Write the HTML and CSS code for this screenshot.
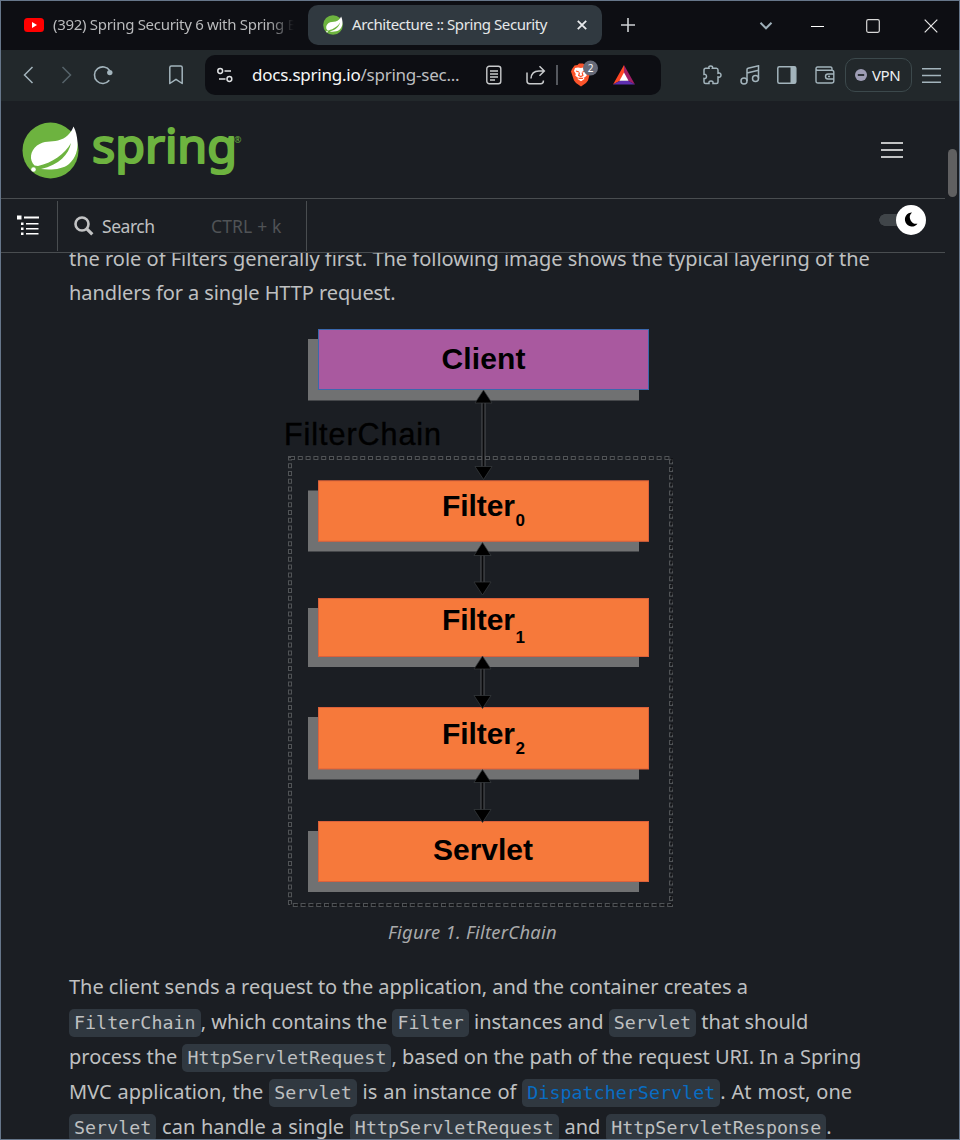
FILE: index.html
```html
<!DOCTYPE html>
<html lang="en">
<head>
<meta charset="utf-8">
<title>Architecture :: Spring Security</title>
<link rel="stylesheet" href="styles.css">
</head>
<body>
<div class="window">
  <div class="tabs">
    <svg class="yt" width="20" height="14" viewBox="0 0 20 14"><rect width="20" height="14" rx="3.5" fill="#f00"/><path d="M8 4l5 3-5 3z" fill="#fff"/></svg>
    <span class="tab-idle">(392) Spring Security 6 with Spring B</span>
    <div class="tab">
      <svg width="20" height="20" viewBox="0 0 57 57"><use href="#leaf"/></svg>
      <span class="tab-title">Architecture :: Spring Security</span>
      <svg class="tab-close" width="10" height="10" viewBox="0 0 10 10"><path d="M.8.8l8.4 8.4M9.2.8L.8 9.2" stroke="#e8eaec" stroke-width="1.8"/></svg>
    </div>
    <svg class="plus" width="14" height="14" viewBox="0 0 14 14"><path d="M7 0v14M0 7h14" stroke="#cdd0d3" stroke-width="1.6"/></svg>
    <svg class="chev" width="14" height="10" viewBox="0 0 14 10"><path d="M1.5 1.8L7 7.3l5.500-5.500" fill="none" stroke="#9fb0ba" stroke-width="2"/></svg>
    <svg class="min" width="13" height="14" viewBox="0 0 13 14"><path d="M0 7.500h13" stroke="#fff"/></svg>
    <svg class="max" width="14" height="14" viewBox="0 0 14 14"><rect x=".7" y=".7" width="12.600" height="12.600" rx="1.500" fill="none" stroke="#d8d8d8" stroke-width="1.200"/></svg>
    <svg class="close" width="14" height="14" viewBox="0 0 14 14"><path d="M.7.7l12.600 12.600M13.300.7L.7 13.300" stroke="#e8e8e8" stroke-width="1.200"/></svg>
  </div>

  <div class="toolbar">
    <svg class="back" width="11" height="18" viewBox="0 0 11 18"><path d="M9.500 1L1.500 9l8 8" fill="none" stroke="#a3b4bc" stroke-width="1.500"/></svg>
    <svg class="fwd" width="11" height="18" viewBox="0 0 11 18"><path d="M1.500 1l8 8-8 8" fill="none" stroke="#56636a" stroke-width="1.500"/></svg>
    <svg class="reload" width="20" height="20" viewBox="0 0 20 20"><path d="M16.300 15.300A8.300 8.300 0 1 1 16.800 5.700" fill="none" stroke="#a3b4bc" stroke-width="1.600"/><circle cx="16.800" cy="7.600" r="2.700" fill="#a3b4bc"/></svg>
    <svg class="mark" width="14" height="20" viewBox="0 0 14 20"><path d="M.8 2.500Q.8.900 2.400.9h9.200q1.600 0 1.600 1.600V18.500L7 14.300.8 18.500z" fill="none" stroke="#a3b4bc" stroke-width="1.500" stroke-linejoin="round"/></svg>
    <div class="urlbar">
      <svg class="tune" width="16" height="16" viewBox="0 0 16 16" fill="none" stroke="#e0e2e4" stroke-width="1.500"><circle cx="3.200" cy="4" r="2.400"/><path d="M7.500 4H14M2 12h6.500"/><circle cx="12.400" cy="12" r="2.400"/></svg>
      <span class="url">docs.spring.io<span class="path">/spring-sec...</span></span>
      <svg class="reader" width="16" height="20" viewBox="0 0 16 20" fill="none" stroke="#c9cbcd" stroke-width="1.400"><rect x=".8" y="1.200" width="14" height="17.600" rx="2.500"/><path d="M4 6h8M4 9h8M4 12h8M4 15h5"/></svg>
      <svg class="share" width="20" height="20" viewBox="0 0 20 20" fill="none" stroke="#c9cbcd" stroke-width="1.500"><path d="M1 7.500V16q0 2.700 2.700 2.700h11q2.700 0 2.700-2.700v-.5M5 13.500Q5.500 6 13 6H18M13.500 1.300L18.300 6l-4.800 4.700"/></svg>
      <i class="sep"></i>
      <svg class="brave" width="29" height="30" viewBox="0 0 29 30"><path d="M4.500 7.500L7.500 7l1.500-1.500h4L15 7l3 .5 1.500 3.500 1 2.500-2.500 9-2 2.500-5 3.500-5-3.500-2-2.500-3-9L2 11z" fill="#fb542b"/><path d="M5 10l3-.6 2.800.6 2.800-.6 3 .6 1.400 3-1.800 3 .6 1.500-2.300 2-1-.3 1 1.700-3.500 2.400-3.500-2.400 1-1.700-1 .3-2.300-2 .6-1.500-1.800-3z" fill="#fff"/><path d="M6 13l3 1M15.500 13l-3 1M9.500 14.500l-.8 3 2.100 1 2.100-1-.8-3M8.500 20.300h4.500" fill="none" stroke="#fb542b" stroke-width="1.200"/><circle cx="20.500" cy="10" r="7.500" fill="#666a78"/><text x="17.700" y="13.600" class="badge">2</text></svg>
      <svg class="bat" width="22" height="20" viewBox="0 0 22 20"><path d="M11 0L0 19.500 7.300 15.500 11 8.500z" fill="#ff4724"/><path d="M11 0l11 19.500-7.300-4L11 8.500z" fill="#a01f66"/><path d="M0 19.500h22l-7.300-4H7.300z" fill="#5f2fb0"/><path d="M11 7.500l4.500 8.300h-9z" fill="#fff"/></svg>
    </div>
    <svg class="puzzle" width="20" height="20" viewBox="0 0 20 20"><path d="M2 5q0-1.800 1.800-1.800H7Q6.300 1 8.700 1t1.700 2.200h4Q16 3.200 16 5v3.300q3-.9 3 1.800t-3 1.900v5q0 1.500-1.500 1.500H11q.4-2.600-2-2.600t-2 2.600H3.600Q2 18.500 2 17v-3.600q2.500.3 2.500-2t-2.500-2z" fill="none" stroke="#a3b4bc" stroke-width="1.500"/></svg>
    <svg class="music" width="20" height="20" viewBox="0 0 20 20" fill="none" stroke="#a3b4bc" stroke-width="1.500"><circle cx="4" cy="16" r="3"/><circle cx="15.500" cy="13.600" r="3"/><path d="M7 16V4.500q0-1 1-1.300l10.500-2.400v12.800M7 8l11.500-2.800"/></svg>
    <svg class="panel" width="20" height="18" viewBox="0 0 20 18"><rect x=".8" y=".8" width="18" height="16.400" rx="1.500" fill="none" stroke="#a3b4bc" stroke-width="1.500"/><path d="M13.500 1h5v16h-5z" fill="#a3b4bc"/></svg>
    <svg class="wallet" width="20" height="18" viewBox="0 0 20 18" fill="none" stroke="#a3b4bc" stroke-width="1.400"><path d="M1 2.500Q1 1 2.500 1h13Q17 1 17 3v1M1 2.500Q1 4.200 2.700 4.200h14Q18.800 4.200 18.800 6v9q0 2-2 2H3q-2 0-2-2zM18.800 8H13q-2.500 0-2.500 2.500T13 13h5.800"/><path d="M13 10.500h2"/></svg>
    <div class="vpn"><svg width="12" height="12" viewBox="0 0 12 12"><circle cx="6" cy="6" r="6" fill="#9e9db5"/><path d="M2.800 6h6.400" stroke="#22282b" stroke-width="1.800"/></svg><span>VPN</span></div>
    <svg class="menu" width="19" height="15" viewBox="0 0 19 15"><path d="M0 .8h19M0 7.500h19M0 14.200h19" stroke="#a3b4bc" stroke-width="1.400"/></svg>
  </div>

  <div class="page">
    <header class="site">
      <svg class="logo" width="230" height="60" viewBox="0 0 230 60">
        <defs><g id="leaf"><circle cx="28.500" cy="28.500" r="28" fill="#6db33f"/><path d="M51.500 4.500C49 11 44 16.500 36 18.500 29 20 22 18.500 15 23.500 8 29 7 38 12.500 43.500L16 44C30 41 43 32 49 21 47 32 37 43 19 47 27 48 40 48 47 42 54 36 56 27 55.500 20 55 14 54 9 51.500 4.500z" fill="#fff"/><circle cx="11.500" cy="47.500" r="2.300" fill="#fff"/></g></defs>
        <use href="#leaf"/>
        <text class="word" x="70" y="40.500" textLength="145" lengthAdjust="spacingAndGlyphs">spring</text>
        <text class="reg" x="212" y="20.500">®</text>
      </svg>
      <span class="burger"><i></i><i></i><i></i></span>
    </header>
    <nav class="subnav">
      <span class="toc"><svg width="22" height="21" viewBox="0 0 22 21" fill="#fff"><path d="M0 .5h4.500v4H0zM7 1.500h15v2H7zM4 7.500h2.500v2.500H4zM9 8h12.500v1.500H9zM4 12.500h2.500V15H4zM9 13h12.500v1.500H9zM4 17.500h2.500V20H4zM9 18h12.500v1.500H9z"/></svg></span>
      <span class="search"><svg width="20" height="20" viewBox="0 0 20 20" fill="none" stroke="#c2c3c4"><circle cx="8" cy="8" r="6.500" stroke-width="2.600"/><path d="M12.800 12.800l5.500 5.500" stroke-width="3.200"/></svg><span class="label">Search</span><span class="keys">CTRL + k</span></span>
      <span class="theme"><svg width="30" height="30" viewBox="0 0 30 30"><circle cx="15" cy="15" r="15" fill="#fff"/><path d="M16 7.500a7 7 0 1 0 5.500 11.200A6.500 6.500 0 0 1 16 7.500z" fill="#000"/></svg></span>
    </nav>
    <main class="article">
      <p class="intro"><span class="l a1">the role of Filters generally first. The following image shows the typical layering of the</span><span class="l a2">handlers for a single HTTP request.</span></p>
      <figure>
        <svg class="diagram" width="392" height="585" viewBox="284 325 392 585">
          <g class="frame"><rect class="dash" x="290" y="458" width="381" height="447"/><rect class="hole" x="290" y="458" width="381" height="447"/><path class="shade" d="M672 458v447H290"/></g>
          <g fill="#707172"><path d="M308 339h331v61.500H308zM308 490.500h331v61H308zM308 608h331v59H308zM308 717h331v62.500H308zM308 831h331v61H308z"/></g>
          <rect x="318.500" y="329.500" width="330" height="60" fill="#a9599f" stroke="#3b68ad"/>
          <g fill="#f6793b" stroke="#dc613b"><rect x="318.500" y="480.800" width="330" height="60.500"/><rect x="318.500" y="598.500" width="330" height="58"/><rect x="318.500" y="707.500" width="330" height="61.500"/><rect x="318.500" y="821.500" width="330" height="60"/></g>
          <g class="lines"><path d="M483.500 400v68M482.500 553v30M482.500 667v30M482.500 781v30"/></g>
          <g class="core"><path d="M483.500 400v68M482.500 553v30M482.500 667v30M482.500 781v30"/></g>
          <g class="tips"><path d="M483.500 390l8.500 13h-17zM483.500 479.500l8.500-13h-17zM482.500 542.500l8.500 13h-17zM482.500 595l8.500-13h-17zM482.500 656l8.500 13h-17zM482.500 708.500l8.500-13h-17zM482.500 769.500l8.500 13h-17zM482.500 822.500l8.500-13h-17z"/></g>
          <text class="chain" x="284" y="445" textLength="157">FilterChain</text>
          <g class="names"><text x="441.500" y="368.500" textLength="84">Client</text><text x="442" y="516" textLength="73">Filter</text><text x="442" y="630" textLength="73">Filter</text><text x="442" y="744" textLength="73">Filter</text><text x="433" y="860" textLength="100">Servlet</text></g>
          <g class="subs"><text x="515.500" y="526">0</text><text x="515.500" y="642.500">1</text><text x="515.500" y="754">2</text></g>
        </svg>
        <figcaption>Figure 1. FilterChain</figcaption>
      </figure>
      <p class="body"><span class="l b1">The client sends a request to the application, and the container creates a</span><span class="l b2"><code>FilterChain</code>, which contains the <code>Filter</code> instances and <code>Servlet</code> that should</span><span class="l b3">process the <code>HttpServletRequest</code>, based on the path of the request URI. In a Spring</span><span class="l b4">MVC application, the <code>Servlet</code> is an instance of <code class="link">DispatcherServlet</code>. At most, one</span><span class="l b5"><code>Servlet</code> can handle a single <code>HttpServletRequest</code> and <code>HttpServletResponse</code>.</span></p>
    </main>
    <i class="scroll"></i>
  </div>
</div>
</body>
</html>
```
FILE: styles.css
```css
* { box-sizing: border-box; }
body { margin: 0; background: #1b1e23; font-family: "Noto Sans", sans-serif; }
svg { display: block; flex: none; }
p, figure { margin: 0; }
.window { width: 960px; height: 1140px; border: 1px solid #66768a; overflow: hidden; display: flex; flex-direction: column; color: #bfc0c1; }

.tabs { height: 49px; flex: none; background: #0d0e13; display: flex; align-items: center; padding: 0 0 2px 23px; }
.tabs > svg { margin-top: 2px; }
.tabs > .yt { margin-top: 1px; }
.tab-idle { margin: -2px 0 0 9px; width: 241px; white-space: nowrap; overflow: hidden; font-size: 15px; color: #b9babc; letter-spacing: -.3px; -webkit-mask-image: linear-gradient(90deg, #000 215px, transparent 241px); mask-image: linear-gradient(90deg, #000 215px, transparent 241px); }
.tab { margin-left: 14px; width: 294px; height: 40px; border-radius: 10px; background: #303940; display: flex; align-items: center; padding-left: 15px; }
.tab-title { margin: -2px 0 0 9px; width: 216px; font-size: 15px; letter-spacing: -.42px; color: #e6e8e9; white-space: nowrap; }
.tab-close { margin-left: 8.500px; }
.tabs .plus { margin: 1px 0 0 19px; }
.chev { margin-left: 124px; }
.min { margin-left: 38px; }
.max { margin-left: 42px; }
.close { margin-left: 44px; }

.toolbar { height: 51px; flex: none; background: #22282b; display: flex; align-items: center; padding: 0 0 1px 22px; }
.fwd { margin-left: 27px; }
.reload { margin-left: 21px; }
.mark { margin-left: 56px; }
.urlbar { margin-left: 22px; width: 456px; height: 40px; border-radius: 10px; background: #0d0e13; display: flex; align-items: center; padding-left: 12px; }
.url { margin: -2px 0 0 19px; width: 234px; font-size: 17px; letter-spacing: -.24px; color: #f7f7f7; white-space: nowrap; }
.path { color: #bdbec0; }
.share { margin-left: 24px; }
.sep { width: 2px; height: 20px; margin-left: 10px; background: #55585e; }
.brave { margin: -4px 0 0 12px; }
.badge { font: 10px "Noto Sans", sans-serif; fill: #fff; }
.bat { margin-left: 14px; }
.puzzle { margin-left: 41px; }
.music { margin-left: 18px; }
.panel { margin-left: 17px; }
.wallet { margin-left: 18px; }
.vpn { margin-left: 10px; width: 67px; height: 34px; border: 1px solid #3c494c; border-radius: 10px; display: flex; align-items: center; padding-left: 9px; font-size: 15px; letter-spacing: -.4px; color: #eef0f1; }
.vpn span { margin-left: 5px; }
.menu { margin-left: 10px; }

.page { position: relative; flex: 1; background: #1b1e23; display: flex; flex-direction: column; overflow: hidden; min-height: 0; }
.site { width: 944px; height: 98px; flex: none; border-bottom: 1px solid #494d50; display: flex; justify-content: space-between; align-items: flex-start; padding: 20.500px 42px 0 20.500px; }
.logo { overflow: visible; }
.word { font: 47.500px "Noto Sans", sans-serif; fill: #6db33f; stroke: #6db33f; stroke-width: 2.200px; stroke-linejoin: round; }
.reg { font: 9px "Noto Sans", sans-serif; fill: #6db33f; }
.burger { width: 22px; margin-top: 20.500px; display: flex; flex-direction: column; gap: 5px; }
.burger i { height: 2px; background: #c2c3c4; }
.subnav { width: 944px; height: 54px; flex: none; border-bottom: 1px solid #494d50; display: flex; align-items: center; }
.toc { width: 57px; height: 50px; border-right: 1px solid #494d50; display: flex; align-items: center; padding-left: 16px; }
.search { width: 249px; height: 50px; border-right: 1px solid #494d50; display: flex; align-items: center; padding-left: 16px; font-size: 17.500px; white-space: nowrap; }
.label { margin-left: 8px; width: 109px; letter-spacing: -.45px; }
.keys { color: #505356; letter-spacing: .15px; }
.theme { margin: -11px 0 0 572px; width: 48px; height: 30px; padding-left: 17px; background: radial-gradient(circle at 6px 15px, #404549 5.500px, transparent 6px), linear-gradient(#404549, #404549) 6px 9px / 24px 12px no-repeat; }

.article { flex: 1; min-height: 0; overflow: hidden; padding-left: 68px; font-size: 20px; }
.l { display: block; white-space: nowrap; height: 35px; line-height: 35px; }
.intro { margin-top: -11px; }
.intro .l { height: 34px; line-height: 34px; }
.a1 { letter-spacing: -.01px; }
.a2 { letter-spacing: -.09px; }
.b1 { letter-spacing: -.03px; }
.b3 { letter-spacing: -.01px; }
.b4 { word-spacing: .7px; }
.b5 { word-spacing: .5px; }
.diagram { margin: 15px 0 0 215px; }
.frame rect, .frame path, .lines path, .core path { fill: none; }
.dash { stroke: #505356; stroke-width: 4px; stroke-dasharray: 5 2.800; }
.hole { stroke: #16181c; stroke-width: 1.800px; stroke-dasharray: 3 4.800; stroke-dashoffset: -1px; }
.shade { stroke: #08090b; stroke-width: 1px; stroke-dasharray: 4 3.800; }
.lines path { stroke: #505356; stroke-width: 4px; }
.core path { stroke: #08090b; stroke-width: 2px; }
.tips path { fill: #000; stroke: #3a3d40; stroke-width: .7px; }
.chain { font: 30.500px "Liberation Sans", Arial, sans-serif; fill: #000; stroke: #000; stroke-width: .4px; }
.names { font: bold 30px "Liberation Sans", Arial, sans-serif; fill: #000; }
.subs { font: bold 17px "Liberation Sans", Arial, sans-serif; fill: #000; }
figcaption { margin-left: 319px; height: 44px; line-height: 44px; font-size: 18.400px; letter-spacing: .26px; font-style: italic; color: #a9aaab; white-space: nowrap; }
.body { margin-top: 15px; }
.body .l { height: 35.100px; line-height: 35.100px; }
code { font: 18.300px "DejaVu Sans Mono", monospace; background: #303840; border-radius: 5px; padding: 3px 5px 4px; letter-spacing: .05px; word-spacing: 0; }
.link { color: #086dc3; }
.scroll { position: absolute; right: 2px; top: 48px; width: 9px; height: 48px; border-radius: 5px; background: #606061; }
```
